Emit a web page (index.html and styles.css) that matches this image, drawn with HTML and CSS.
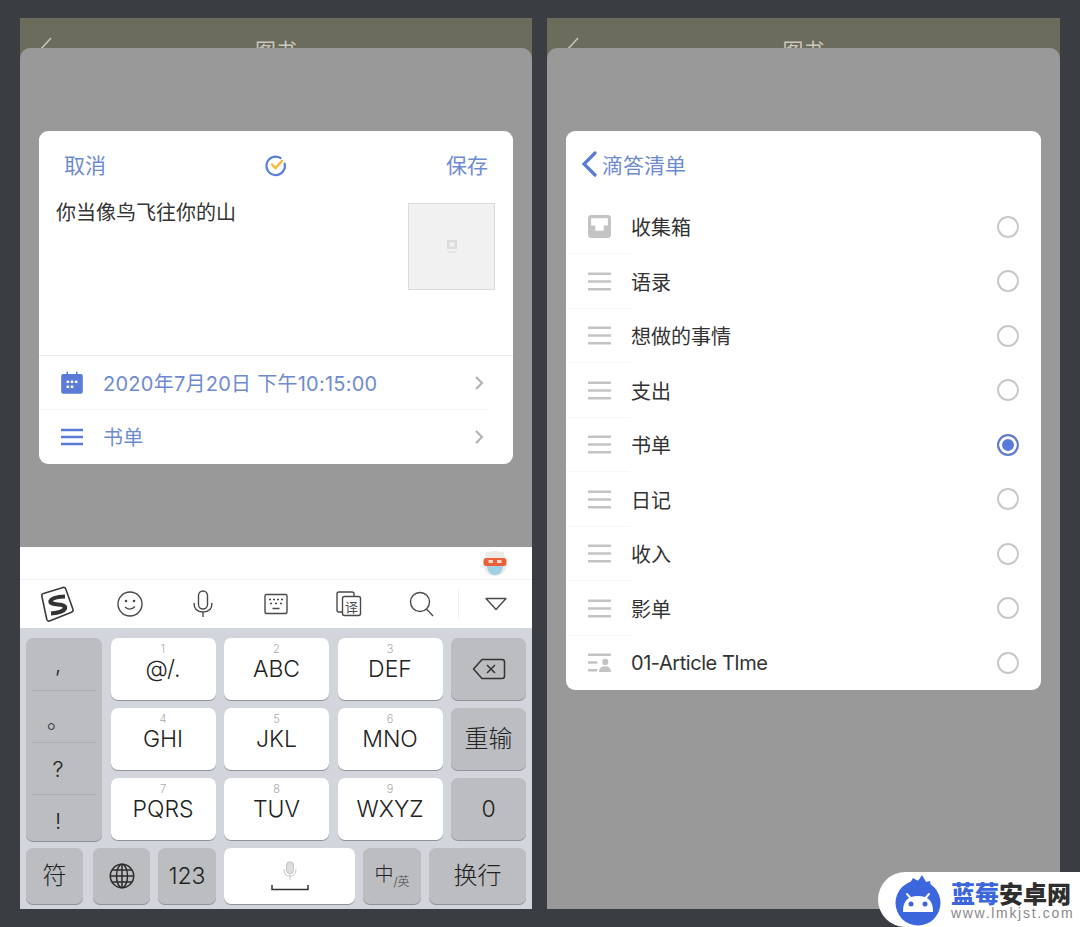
FILE: index.html
```html
<!DOCTYPE html>
<html>
<head>
  <meta charset="utf-8">
  <title>滴答清单</title>
  <link rel="stylesheet" href="styles.css">
</head>
<body>
  <div class="screens">

    <!-- left phone: share sheet with keyboard -->
    <div class="phone">
      <div class="app-bar">
        <svg class="app-back" width="14" height="24" viewBox="0 0 14 24"><path d="M12 1 L2 12 L12 23" fill="none" stroke="#c9c9bd" stroke-width="1.5"/></svg>
        <span class="app-title">图书</span>
      </div>
      <div class="sheet sheet-left">
        <div class="sheet-space">
          <div class="card">
            <div class="card-head">
              <span class="link">取消</span>
              <svg width="24" height="24" viewBox="0 0 24 24">
                <path d="M20.6 9.5 A9.2 9.2 0 1 1 16.5 4" fill="none" stroke="#5a7fd6" stroke-width="2.2" stroke-linecap="round"/>
                <path d="M8 10.500 L11.500 14 L18 7" fill="none" stroke="#f5b731" stroke-width="2.4" stroke-linecap="round"/>
              </svg>
              <span class="link">保存</span>
            </div>
            <div class="card-body">
              <span class="note">你当像鸟飞往你的山</span>
              <div class="thumb">
                <svg width="12" height="14" viewBox="0 0 12 14"><rect x="1" y="0" width="10" height="9" fill="#dcdcdc"/><rect x="3.5" y="2.5" width="5" height="4" fill="#f1f1f1"/><rect x="2" y="11" width="8" height="2" fill="#e4e4e4"/></svg>
              </div>
            </div>
            <div class="option option-line">
              <svg class="option-icon" width="24" height="24" viewBox="0 0 24 24">
                <path d="M3.5 3 H6.5 V0.8 H8 V3 H16 V0.8 H17.500 V3 H20.500 A2 2 0 0 1 22.800 5 V20.800 A2 2 0 0 1 20.800 22.800 H3.200 A2 2 0 0 1 1.200 20.800 V5 A2 2 0 0 1 3.500 3 Z" fill="#5a7bd6"/>
                <g fill="#fff"><rect x="6.500" y="9.500" width="2.600" height="2.600" rx=".6"/><rect x="10.700" y="9.500" width="2.600" height="2.600" rx=".6"/><rect x="14.900" y="9.500" width="2.600" height="2.600" rx=".6"/><rect x="6.500" y="14.500" width="2.600" height="2.600" rx=".6"/><rect x="10.700" y="14.500" width="2.600" height="2.600" rx=".6"/></g>
              </svg>
              <span class="option-text">2020年7月20日 下午10:15:00</span>
              <svg class="chevron" width="10" height="16" viewBox="0 0 10 16"><path d="M2 2 L8 8 L2 14" fill="none" stroke="#b4b4b4" stroke-width="2.200"/></svg>
            </div>
            <div class="option">
              <svg class="option-icon" width="24" height="18" viewBox="0 0 24 18"><path d="M1 2 H23 M1 9 H23 M1 16 H23" stroke="#5a7bd6" stroke-width="2.600"/></svg>
              <span class="option-text">书单</span>
              <svg class="chevron" width="10" height="16" viewBox="0 0 10 16"><path d="M2 2 L8 8 L2 14" fill="none" stroke="#b4b4b4" stroke-width="2.200"/></svg>
            </div>
          </div>
        </div>

        <div class="suggest">
          <svg width="28" height="28" viewBox="0 0 28 28">
            <path d="M5 6 Q4 1 9 3 Q14 1 19 3 Q24 1 23 6 Q27 12 25 19 Q22 27 14 27 Q6 27 3 19 Q1 12 5 6 Z" fill="#ece9e6"/>
            <rect x="2.500" y="9" width="23" height="8" rx="3" fill="#e9603a"/>
            <rect x="7.500" y="11" width="4.500" height="3" fill="#f9d9c9"/>
            <rect x="16" y="11" width="4.500" height="3" fill="#f9d9c9"/>
            <path d="M6 17 H22 Q21 26 14 26 Q7 26 6 17 Z" fill="#9fd0e4"/>
          </svg>
        </div>
        <div class="toolbar">
          <span class="tool"><svg width="37" height="37" viewBox="-1 -2 37 37">
            <path d="M4.500 5.500 L24 -0.500 Q26 -1 26.800 1 L34 21.500 Q34.500 23.500 32.500 24.200 L10.500 33 Q8.500 33.500 7.800 31.500 L2.800 8 Q2.500 6 4.500 5.500 Z" fill="#fff" stroke="#3c3c3c" stroke-width="1.600"/>
            <path d="M26 8.500 Q13 9 11.500 13 Q11 16 19 16.500 Q27 17 26 20.500 Q24 24.500 12 25.500" fill="none" stroke="#333" stroke-width="4.200"/>
          </svg></span>
          <span class="tool"><svg width="28" height="28" viewBox="0 0 28 28"><circle cx="14" cy="14" r="12" fill="none" stroke="#4a4a4a" stroke-width="1.400"/><circle cx="10" cy="11" r="1.300" fill="#4a4a4a"/><circle cx="18" cy="11" r="1.300" fill="#4a4a4a"/><path d="M9 17 Q14 21.500 19 16.500" fill="none" stroke="#4a4a4a" stroke-width="1.400"/></svg></span>
          <span class="tool"><svg width="22" height="28" viewBox="0 0 22 28"><rect x="6.500" y="1" width="9" height="18" rx="4.500" fill="none" stroke="#4a4a4a" stroke-width="1.400"/><path d="M2 13 Q2 22 11 22 Q20 22 20 13 M11 22 V27" fill="none" stroke="#4a4a4a" stroke-width="1.400"/></svg></span>
          <span class="tool"><svg width="26" height="24" viewBox="0 0 26 24"><rect x="2" y="2.500" width="22" height="19" rx="1.500" fill="none" stroke="#4a4a4a" stroke-width="1.400"/><path d="M6 7.500 H8 M10 7.500 H12 M14 7.500 H16 M18 7.500 H20 M7 11.500 H9 M12 11.500 H14 M17 11.500 H19 M9.500 16.500 H16.500" stroke="#4a4a4a" stroke-width="1.600"/></svg></span>
          <span class="tool"><svg width="28" height="28" viewBox="0 0 28 28"><path d="M7 22 H4 Q2 22 2 20 V4 Q2 2 4 2 H17 Q19 2 19 4 V6" fill="none" stroke="#4a4a4a" stroke-width="1.400"/><rect x="7.500" y="6.500" width="18" height="19" rx="2" fill="#fff" stroke="#4a4a4a" stroke-width="1.400"/><text x="16.500" y="21.500" font-size="13" text-anchor="middle" class="tool-text">译</text></svg></span>
          <span class="tool"><svg width="26" height="26" viewBox="0 0 26 26"><circle cx="11" cy="11" r="9.500" fill="none" stroke="#4a4a4a" stroke-width="1.400"/><path d="M17.500 18 L24 25" stroke="#4a4a4a" stroke-width="1.400"/></svg></span>
          <span class="tool-sep"></span>
          <span class="tool"><svg width="24" height="16" viewBox="0 0 24 16"><path d="M2 2.500 H22 L12 13.500 Z" fill="none" stroke="#4a4a4a" stroke-width="1.400" stroke-linejoin="round"/></svg></span>
        </div>

        <div class="keyboard">
          <div class="keys">
            <div class="key key-fn punct">
              <span>,</span>
              <span>。</span>
              <span>?</span>
              <span>!</span>
            </div>
            <div class="key"><small>1</small>@/.</div>
            <div class="key"><small>2</small>ABC</div>
            <div class="key"><small>3</small>DEF</div>
            <div class="key key-fn">
              <svg width="34" height="22" viewBox="0 0 34 22"><path d="M10 1.500 H30 Q32.500 1.500 32.500 4 V18 Q32.500 20.500 30 20.500 H10 L1.500 11 Z" fill="none" stroke="#333" stroke-width="1.500" stroke-linejoin="round"/><path d="M15 7 L23 15 M23 7 L15 15" stroke="#333" stroke-width="1.500"/></svg>
            </div>
            <div class="key"><small>4</small>GHI</div>
            <div class="key"><small>5</small>JKL</div>
            <div class="key"><small>6</small>MNO</div>
            <div class="key key-fn key-cjk">重输</div>
            <div class="key"><small>7</small>PQRS</div>
            <div class="key"><small>8</small>TUV</div>
            <div class="key"><small>9</small>WXYZ</div>
            <div class="key key-fn">0</div>
          </div>
          <div class="bottom-keys">
            <div class="key key-fn key-cjk w-sym">符</div>
            <div class="key key-fn w-globe">
              <svg width="26" height="26" viewBox="0 0 26 26" fill="none" stroke="#2b2b2b" stroke-width="1.500"><circle cx="13" cy="13" r="11.700"/><ellipse cx="13" cy="13" rx="5.500" ry="11.700"/><path d="M13 1.300 V24.700 M1.300 13 H24.700 M3 7 H23 M3 19 H23"/></svg>
            </div>
            <div class="key key-fn w-num">123</div>
            <div class="key w-space">
              <svg width="38" height="30" viewBox="0 0 38 30" fill="none"><rect x="15.500" y="0.800" width="7" height="12" rx="3.500" fill="#ddd" stroke="#c4c4c4" stroke-width="1"/><path d="M13 8 Q13 15 19 15 Q25 15 25 8 M19 15 V19" stroke="#c4c4c4" stroke-width="1"/><path d="M1 24 V28.500 H37 V24" stroke="#333" stroke-width="1.500"/></svg>
            </div>
            <div class="key key-fn w-lang"><span class="lang">中<i>/英</i></span></div>
            <div class="key key-fn key-cjk w-enter">换行</div>
          </div>
        </div>
      </div>
    </div>

    <!-- right phone: list picker -->
    <div class="phone phone-right">
      <div class="app-bar">
        <svg class="app-back" width="14" height="24" viewBox="0 0 14 24"><path d="M12 1 L2 12 L12 23" fill="none" stroke="#c9c9bd" stroke-width="1.500"/></svg>
        <span class="app-title">图书</span>
      </div>
      <div class="sheet">
        <div class="card list-card">
          <div class="list-head">
            <svg width="18" height="26" viewBox="0 0 18 26"><path d="M15 2 L4 13 L15 24" fill="none" stroke="#5a7bd6" stroke-width="3.200" stroke-linecap="round"/></svg>
            <span class="list-title">滴答清单</span>
          </div>
          <div class="list-row">
            <svg class="row-icon" width="23" height="23" viewBox="0 0 22 22"><path d="M3 0 H19 Q22 0 22 3 V19 Q22 22 19 22 H3 Q0 22 0 19 V3 Q0 0 3 0 Z" fill="#c4c4c4"/><path d="M3 3 H19 V10 H15 V15 H7 V10 H3 Z" fill="#fff"/></svg>
            <span class="row-text">收集箱</span><span class="radio"></span>
          </div>
          <div class="list-row">
            <svg class="row-icon" width="23" height="19" viewBox="0 0 22 18"><path d="M0 1.500 H22 M0 9 H22 M0 16.500 H22" stroke="#c4c4c4" stroke-width="2.400"/></svg>
            <span class="row-text">语录</span><span class="radio"></span>
          </div>
          <div class="list-row">
            <svg class="row-icon" width="23" height="19" viewBox="0 0 22 18"><path d="M0 1.500 H22 M0 9 H22 M0 16.500 H22" stroke="#c4c4c4" stroke-width="2.400"/></svg>
            <span class="row-text">想做的事情</span><span class="radio"></span>
          </div>
          <div class="list-row">
            <svg class="row-icon" width="23" height="19" viewBox="0 0 22 18"><path d="M0 1.500 H22 M0 9 H22 M0 16.500 H22" stroke="#c4c4c4" stroke-width="2.400"/></svg>
            <span class="row-text">支出</span><span class="radio"></span>
          </div>
          <div class="list-row">
            <svg class="row-icon" width="23" height="19" viewBox="0 0 22 18"><path d="M0 1.500 H22 M0 9 H22 M0 16.500 H22" stroke="#c4c4c4" stroke-width="2.400"/></svg>
            <span class="row-text">书单</span><span class="radio radio-on"></span>
          </div>
          <div class="list-row">
            <svg class="row-icon" width="23" height="19" viewBox="0 0 22 18"><path d="M0 1.500 H22 M0 9 H22 M0 16.500 H22" stroke="#c4c4c4" stroke-width="2.400"/></svg>
            <span class="row-text">日记</span><span class="radio"></span>
          </div>
          <div class="list-row">
            <svg class="row-icon" width="23" height="19" viewBox="0 0 22 18"><path d="M0 1.500 H22 M0 9 H22 M0 16.500 H22" stroke="#c4c4c4" stroke-width="2.400"/></svg>
            <span class="row-text">收入</span><span class="radio"></span>
          </div>
          <div class="list-row">
            <svg class="row-icon" width="23" height="19" viewBox="0 0 22 18"><path d="M0 1.500 H22 M0 9 H22 M0 16.500 H22" stroke="#c4c4c4" stroke-width="2.400"/></svg>
            <span class="row-text">影单</span><span class="radio"></span>
          </div>
          <div class="list-row">
            <svg class="row-icon" width="23" height="19" viewBox="0 0 22 18"><path d="M0 1.500 H22 M0 9 H9 M0 16.500 H9" stroke="#c4c4c4" stroke-width="2.400"/><circle cx="16.500" cy="8.500" r="3" fill="#c4c4c4"/><path d="M10.500 18 Q10.500 12.500 16.500 12.500 Q22 12.500 22 18 Z" fill="#c4c4c4"/></svg>
            <span class="row-text row-latin">01-Article TIme</span><span class="radio"></span>
          </div>
        </div>
      </div>
    </div>
  </div>

  <!-- site watermark -->
  <div class="watermark">
    <svg width="50" height="52" viewBox="0 0 50 52">
      <path d="M12 12 L17 9 L20 4 L25 7 L29 1 L33 8 L37 7 L38 12 Z" fill="#3b66dc"/>
      <circle cx="25" cy="29" r="22.500" fill="#3b66dc"/>
      <path d="M14 20 L17.500 24 M36 20 L32.500 24" stroke="#fff" stroke-width="2" stroke-linecap="round"/>
      <path d="M10 38 Q9.500 22 25 22 Q40.500 22 40 38 Z" fill="#fff"/>
      <circle cx="18" cy="30" r="2.500" fill="#3b66dc"/>
      <circle cx="32" cy="30" r="2.500" fill="#3b66dc"/>
    </svg>
    <div class="mark-text">
      <div class="mark-name"><span class="mark-blue">蓝莓</span>安卓网</div>
      <div class="mark-url">www.lmkjst.com</div>
    </div>
  </div>
</body>
</html>
```

FILE: styles.css
```css
* {
  box-sizing: border-box;
}

html, body {
  height: 100%;
}

body {
  margin: 0;
  background-color: #3a3d42;
  font-family: "Inter", "Noto Sans CJK SC", sans-serif;
  overflow: hidden;
  position: relative;
}

.screens {
  display: flex;
  gap: 15px;
  padding: 18px 20px 0;
  height: 909px;
}

.phone {
  width: 512px;
  display: flex;
  flex-direction: column;
  background-color: #6b6c5c;
}

.phone-right {
  width: 513px;
}

.app-bar {
  height: 30px;
  flex: none;
  overflow: hidden;
  display: flex;
  justify-content: center;
  padding-top: 19px;
  position: relative;
}

.app-back {
  position: absolute;
  left: 19px;
  top: 19px;
}

.app-title {
  font-size: 21px;
  line-height: 28px;
  color: #c9c9bd;
}

.sheet {
  flex: 1;
  display: flex;
  flex-direction: column;
  background-color: #999;
  border-radius: 10px 10px 0 0;
  padding: 83px 19px 0;
}

.sheet-left {
  padding: 0;
}

.sheet-space {
  height: 499px;
  padding: 83px 19px 0;
}

.card {
  background-color: #fff;
  border-radius: 9px;
  color: #333;
}

.card-head {
  display: flex;
  justify-content: space-between;
  align-items: center;
  padding: 12px 25px 0 25px;
  height: 57px;
}

.link {
  font-size: 21px;
  line-height: 24px;
  color: #6f8bd0;
}

.card-body {
  display: flex;
  justify-content: space-between;
  align-items: flex-start;
  height: 167px;
  padding: 15px 18px 0 17px;
}

.note {
  font-size: 20px;
  line-height: 28px;
  margin-top: -4px;
  color: #333;
}

.thumb {
  width: 87px;
  height: 87px;
  background-color: #f1f1f1;
  border: 1px solid #dcdcdc;
  display: flex;
  align-items: center;
  justify-content: center;
}

.option {
  display: flex;
  align-items: center;
  height: 54.5px;
  padding-left: 21px;
  padding-right: 29px;
}

.option-line {
  border-top: 1px solid #ececec;
  position: relative;
}

.option-line::after {
  content: "";
  position: absolute;
  left: 0;
  right: 25px;
  bottom: 0;
  border-bottom: 1px solid #f6f6f6;
}

.option-icon {
  flex: none;
  margin-right: 19px;
}

.option-text {
  flex: 1;
  font-size: 20px;
  letter-spacing: 0.25px;
  color: #6f8bd0;
}

.chevron {
  flex: none;
}

.suggest {
  height: 33px;
  background-color: #fff;
  display: flex;
  justify-content: flex-end;
  align-items: center;
  padding-right: 23px;
  border-bottom: 1px solid #f3f3f3;
}

.toolbar {
  height: 48px;
  background-color: #fff;
  display: grid;
  grid-template-columns: repeat(6, 73px) 1px 1fr;
  align-items: center;
}

.tool {
  display: flex;
  align-items: center;
  justify-content: center;
}

.tool-text {
  font-family: "Noto Sans CJK SC", sans-serif;
  fill: #4a4a4a;
}

.tool-sep {
  height: 30px;
  background-color: #eee;
}

.keyboard {
  flex: 1;
  background-color: #d2d5db;
  padding: 10px 6px 0;
  display: flex;
  flex-direction: column;
  gap: 8px;
}

.keys {
  display: grid;
  grid-template-columns: 76px 105px 105px 105px 75px;
  grid-template-rows: 62px 62px 62px;
  column-gap: 8.5px;
  row-gap: 8px;
}

.key {
  background-color: #fff;
  border-radius: 7px;
  box-shadow: 0 1px 0 #8f9298;
  display: flex;
  flex-direction: column;
  align-items: center;
  justify-content: center;
  font-size: 23px;
  font-weight: 300;
  color: #222;
  line-height: 28px;
}

.key small {
  font-size: 11px;
  line-height: 12px;
  color: #aaa;
  margin-top: -12px;
}

.key-fn {
  background-color: #bcbdc1;
}

.key-cjk {
  font-size: 24px;
}

.punct {
  grid-row: 1 / span 3;
  padding: 0 6px;
  font-size: 22px;
  height: 203px;
  display: grid;
  grid-template-columns: 1fr;
  grid-template-rows: 53px 52px 52px 46px;
  align-items: stretch;
  justify-content: stretch;
  justify-items: stretch;
}

.punct span {
  padding-right: 12px;
  display: flex;
  align-items: center;
  justify-content: center;
  border-bottom: 1px solid #adaeb2;
}

.punct span:nth-child(2) {
  padding-top: 6px;
}

.punct span:last-child {
  border-bottom: none;
  padding-top: 6px;
}

.bottom-keys {
  display: flex;
  height: 56px;
  gap: 8px;
}

.w-sym {
  width: 57px;
}

.w-globe {
  width: 57px;
  margin-left: 2px;
}

.w-num {
  width: 58px;
}

.w-space {
  width: 131px;
}

.w-lang {
  width: 58px;
}

.w-enter {
  width: 97px;
}

.lang {
  font-size: 19px;
}

.lang i {
  font-style: normal;
  font-size: 12px;
  color: #444;
  position: relative;
  top: 5px;
}

.list-card {
  height: 558.5px;
}

.list-head {
  height: 68.5px;
  display: flex;
  align-items: center;
  gap: 4px;
  padding: 0 0 3px 14px;
}

.list-title {
  font-size: 21px;
  color: #6f8bd0;
}

.list-row {
  height: 54.5px;
  display: flex;
  align-items: center;
  padding: 0 22px;
  position: relative;
}

.list-row::after {
  content: "";
  position: absolute;
  left: 0;
  width: 64px;
  bottom: 0;
  border-bottom: 1px solid #f7f7f7;
}

.list-row:last-child::after {
  display: none;
}

.row-icon {
  flex: none;
  margin-right: 20px;
}

.row-text {
  flex: 1;
  font-size: 20px;
  color: #333;
}

.row-latin {
  letter-spacing: -0.45px;
}

.radio {
  width: 22px;
  height: 22px;
  border: 2px solid #c8c8c8;
  border-radius: 50%;
  flex: none;
}

.radio-on {
  border-color: #5f7cc9;
  background-color: #5a7bd9;
  box-shadow: inset 0 0 0 3px #fff;
}

.watermark {
  position: absolute;
  left: 878px;
  top: 872px;
  width: 202px;
  height: 55px;
  background-color: #fff;
  border-radius: 28px 0 0 28px;
  display: flex;
  align-items: center;
  padding-left: 15px;
  gap: 8px;
}

.mark-text {
  display: flex;
  flex-direction: column;
}

.mark-name {
  font-family: "Noto Sans CJK SC", sans-serif;
  font-size: 24px;
  font-weight: 900;
  line-height: 27px;
  color: #2e2e2e;
}

.mark-blue {
  color: #3b66dc;
}

.mark-url {
  font-family: "Liberation Sans", sans-serif;
  font-size: 14px;
  line-height: 15px;
  letter-spacing: 1.7px;
  color: #8a8a8a;
}
```
